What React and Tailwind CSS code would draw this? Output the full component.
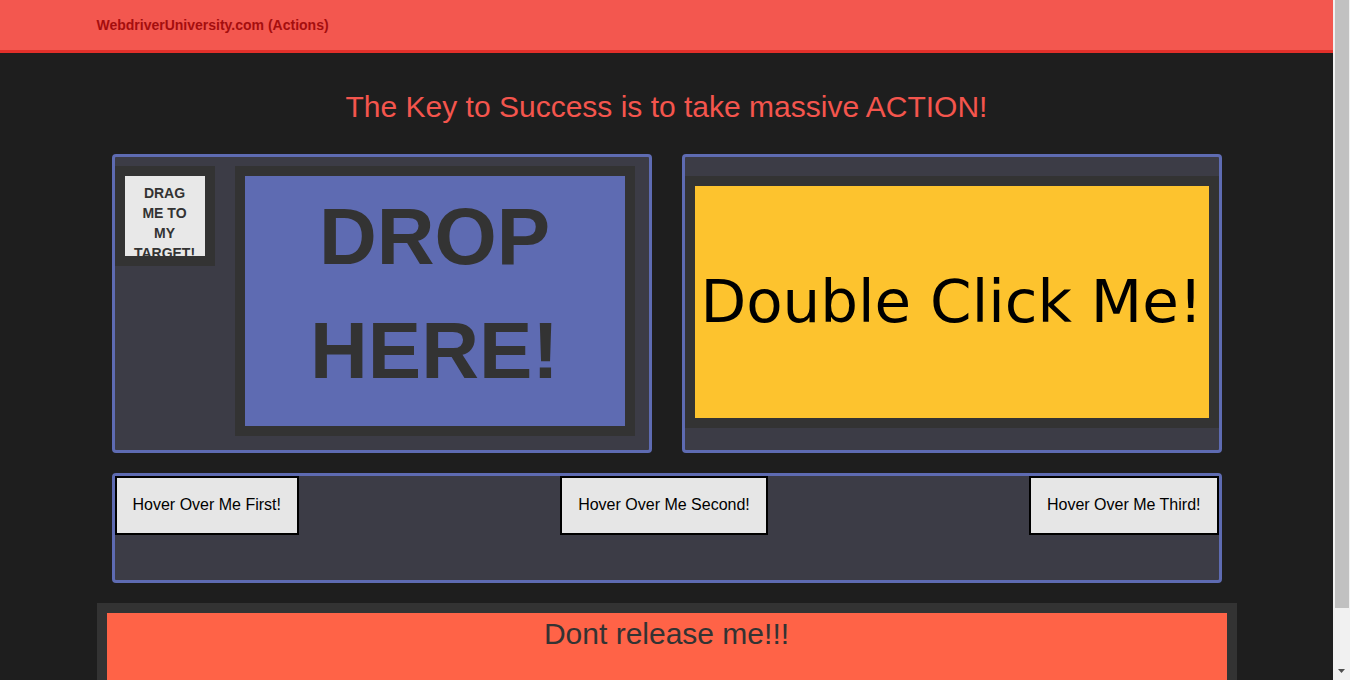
export default function App() {
  const arial = { fontFamily: '"Liberation Sans", Arial, sans-serif' };
  return (
    <div className="h-[680px] overflow-hidden flex bg-[#1e1e1e]" style={arial}>
      <div className="flex-1 min-w-0 h-full overflow-hidden">
        <nav className="h-[53px] bg-[#f3574f] border-b-[3px] border-[#e3302a]">
          <div className="w-[1170px] mx-auto px-[15px] h-[50px] flex items-center">
            <span className="text-[14px] font-bold text-[#a50e0e]">WebdriverUniversity.com (Actions)</span>
          </div>
        </nav>
        <div className="w-[1170px] mx-auto px-[15px]">
          <h1 className="mt-[37px] text-center text-[30px] leading-[33px] text-[#f4554d] font-normal">
            The Key to Success is to take massive ACTION!
          </h1>
          <div className="px-[15px] mt-[31px]">
            <div className="flex gap-[30px]">
              <div className="w-[540px] h-[299px] bg-[#3c3c46] border-[3px] border-[#5e6bb2] rounded-[4px] flex items-start">
                <div className="mt-[9px] w-[100px] h-[100px] border-[10px] border-[#333333] bg-[#333333]">
                  <div className="w-[80px] h-[80px] bg-[#e8e8e8] overflow-hidden px-2 pt-[7px] text-center text-[14px] leading-[20px] font-bold text-[#333333]">
                    DRAG ME TO MY TARGET!
                  </div>
                </div>
                <div className="mt-[9px] ml-[20px] w-[400px] h-[270px] border-[10px] border-[#333333]">
                  <div className="w-full h-full bg-[#5e6bb2] pt-[4px] text-center text-[80px] leading-[114.3px] font-bold text-[#333333]">
                    DROP HERE!
                  </div>
                </div>
              </div>
              <div className="w-[540px] h-[299px] bg-[#3c3c46] border-[3px] border-[#5e6bb2] rounded-[4px]">
                <div className="mt-[19px] h-[252px] border-[10px] border-[#333333]">
                  <div
                    className="w-full h-full bg-[#fdc32e] flex items-center justify-center text-[59.5px] leading-[70px] text-black whitespace-nowrap"
                    style={{ fontFamily: '"DejaVu Sans", Verdana, sans-serif' }}
                  >
                    Double Click Me!
                  </div>
                </div>
              </div>
            </div>
            <div className="mt-[20px] h-[110px] bg-[#3c3c46] border-[3px] border-[#5e6bb2] rounded-[4px] flex justify-between items-start">
              <button className="border-2 border-black bg-[#e6e6e6] p-4 text-[16px] leading-[22.86px] text-black">Hover Over Me First!</button>
              <button className="border-2 border-black bg-[#e6e6e6] p-4 text-[16px] leading-[22.86px] text-black">Hover Over Me Second!</button>
              <button className="border-2 border-black bg-[#e6e6e6] p-4 text-[16px] leading-[22.86px] text-black">Hover Over Me Third!</button>
            </div>
          </div>
          <div className="mt-[20px] border-[10px] border-[#333333]">
            <div className="h-[120px] bg-[#ff6347] pt-[4px] text-center text-[30px] leading-[33px] text-[#333333]">
              Dont release me!!!
            </div>
          </div>
        </div>
      </div>
      <div className="w-[17px] h-full bg-[#f1f1f1] flex flex-col pl-[2px] pr-[1px]">
        <div className="h-[608px] bg-[#c1c1c1]"></div>
        <div className="flex-1 flex items-end justify-center pb-[7px] pr-[1px]">
          <svg width="7" height="4" viewBox="0 0 7 4">
            <path d="M0 0 L7 0 L3.5 4 Z" fill="#505050" />
          </svg>
        </div>
      </div>
    </div>
  );
}
